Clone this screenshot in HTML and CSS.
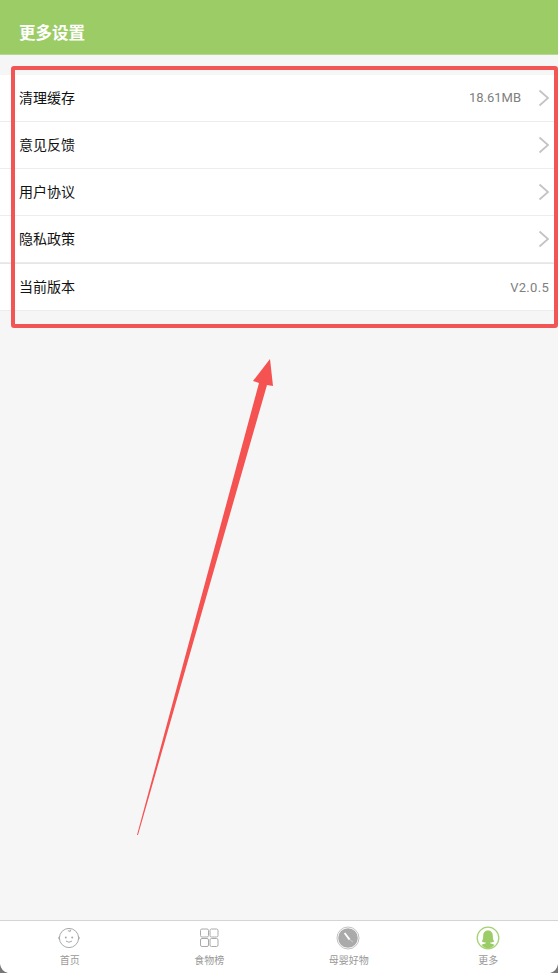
FILE: index.html
```html
<!DOCTYPE html>
<html lang="zh-CN">
<head>
    <meta charset="UTF-8">
    <meta name="viewport" content="width=device-width, initial-scale=1.0">
    <title>更多设置</title>
    <link rel="stylesheet" href="styles.css">
</head>
<body>
    <div class="app">
        <div class="header">更多设置</div>
        <div class="content">
            <div class="list">
                <div class="row">
                    <span class="row-title">清理缓存</span>
                    <span class="row-value">18.61MB</span>
                    <svg class="chevron" viewBox="0 0 12 18"><path d="M1.5 1.5 L10 9 L1.5 16.5"/></svg>
                </div>
                <div class="row">
                    <span class="row-title">意见反馈</span>
                    <svg class="chevron" viewBox="0 0 12 18"><path d="M1.5 1.5 L10 9 L1.5 16.5"/></svg>
                </div>
                <div class="row">
                    <span class="row-title">用户协议</span>
                    <svg class="chevron" viewBox="0 0 12 18"><path d="M1.5 1.5 L10 9 L1.5 16.5"/></svg>
                </div>
                <div class="row">
                    <span class="row-title">隐私政策</span>
                    <svg class="chevron" viewBox="0 0 12 18"><path d="M1.5 1.5 L10 9 L1.5 16.5"/></svg>
                </div>
                <div class="row row-version">
                    <span class="row-title">当前版本</span>
                    <span class="row-value">V2.0.5</span>
                </div>
            </div>
        </div>
        <div class="tabbar">
            <div class="tab">
                <svg class="tab-icon" viewBox="0 0 24 24">
                    <circle class="line" cx="12" cy="12" r="9.6"/>
                    <path class="line" d="M2.6 10.2 Q0.6 12 2.6 13.8 M21.4 10.2 Q23.4 12 21.4 13.8 M10.8 4.4 Q12.4 6.4 13.8 5 Q13.6 3.4 12.4 4.2"/>
                    <circle class="dot" cx="8.8" cy="11.6" r="1"/>
                    <circle class="dot" cx="15.2" cy="11.6" r="1"/>
                    <path class="line" d="M9 15 Q12 17.6 15 15"/>
                </svg>
                <span>首页</span>
            </div>
            <div class="tab">
                <svg class="tab-icon" viewBox="0 0 24 24">
                    <rect class="line" x="3.5" y="3" width="8" height="8" rx="1.5"/>
                    <rect class="line" x="13" y="3" width="8" height="8" rx="1.5"/>
                    <rect class="line" x="3.5" y="12.5" width="8" height="8" rx="1.5"/>
                    <rect class="line" x="13" y="12.5" width="8" height="8" rx="1.5"/>
                </svg>
                <span>食物榜</span>
            </div>
            <div class="tab">
                <svg class="tab-icon" viewBox="0 0 24 24">
                    <circle class="solid" cx="12" cy="12" r="9.8"/>
                    <circle class="ring" cx="12" cy="12" r="11"/>
                    <path class="hand" d="M8.6 7 L13.6 13.6"/>
                    <path class="hand-thin" d="M13.6 13.6 L17 16"/>
                </svg>
                <span>母婴好物</span>
            </div>
            <div class="tab tab-active">
                <svg class="tab-icon" viewBox="0 0 24 24">
                    <circle class="ring-green" cx="12" cy="12" r="10.8"/>
                    <path class="solid-green" d="M12 4.4 C8.4 4.4 7.2 7 7.2 9.8 C7.2 12.4 6.8 14.2 5.8 15.4 C7 16.2 8.4 16.4 9.8 16.4 L9.8 17.2 C8.2 17.8 6.4 18.2 5.4 18.8 C7.2 21 9.4 22.2 12 22.2 C14.6 22.2 16.8 21 18.6 18.8 C17.6 18.2 15.8 17.8 14.2 17.2 L14.2 16.4 C15.6 16.4 17 16.2 18.2 15.4 C17.2 14.2 16.8 12.4 16.8 9.8 C16.8 7 15.6 4.4 12 4.4 Z"/>
                </svg>
                <span>更多</span>
            </div>
        </div>

        <!-- red markup drawn over the screenshot -->
        <svg class="markup" viewBox="0 0 558 973">
            <rect class="markup-box" x="13" y="68" width="543" height="258" rx="1"/>
            <path class="markup-arrow" d="M137 835 L259 383 L253 381 L270 359 L273 386 L267 385 L138 835 Z"/>
            <path class="corner" d="M0 964 Q1 971 8 973 L0 973 Z"/>
            <path class="corner" d="M558 964 Q557 971 550 973 L558 973 Z"/>
        </svg>
    </div>
</body>
</html>
```

FILE: styles.css
```css
* {
    box-sizing: border-box;
}
html, body {
    margin: 0;
    height: 100%;
}
body {
    font-family: "Noto Sans CJK SC", "Liberation Sans", sans-serif;
    background-color: #f6f6f6;
}
.app {
    position: relative;
    display: flex;
    flex-direction: column;
    height: 973px;
    overflow: hidden;
}
.header {
    height: 55px;
    padding-left: 19px;
    font-size: 16.5px;
    font-weight: bold;
    line-height: 64px;
    color: #fff;
    background-color: #9ccc65;
    border-bottom: 1px solid #b5d98d;
}
.content {
    flex: 1;
    padding-top: 20px;
}
.list {
    background: #fff;
}
.row {
    display: flex;
    align-items: center;
    height: 47px;
    padding: 0 8px 2px 19px;
    border-bottom: 1px solid #ececec;
}
.row-version {
    height: 48px;
    padding: 0 9px 0 19px;
    border-top: 1px solid #e6e6e6;
}
.row-title {
    font-size: 14px;
    color: #111;
}
.row-version .row-title {
    margin-top: -2px;
}
.row-value {
    margin-left: auto;
    font-family: Roboto, "Liberation Sans", sans-serif;
    font-size: 13px;
    color: #808080;
}
.row-version .row-value {
    letter-spacing: 0.3px;
}
.chevron {
    width: 12px;
    height: 18px;
    margin-left: auto;
    margin-top: 2px;
    fill: none;
    stroke: #c4c4c4;
    stroke-width: 1.8;
}
.row-value + .chevron {
    margin-left: 17px;
}
.tabbar {
    display: flex;
    height: 53px;
    background: #fff;
    border-top: 1px solid #d4d4d4;
}
.tab {
    flex: 1;
    display: flex;
    flex-direction: column;
    align-items: center;
    padding-top: 5px;
    font-size: 10px;
    line-height: 14px;
    color: #999;
}
.tab-icon {
    width: 24px;
    height: 24px;
    margin-bottom: 3px;
    margin-left: -1px;
}
.line {
    fill: none;
    stroke: #aaa;
    stroke-width: 1;
}
.dot {
    fill: #aaa;
}
.solid {
    fill: #aaa;
}
.ring {
    fill: none;
    stroke: #c2c2c2;
    stroke-width: 1;
}
.hand {
    fill: none;
    stroke: #fff;
    stroke-width: 1.8;
}
.hand-thin {
    fill: none;
    stroke: #e0e0e0;
    stroke-width: 0.6;
}
.ring-green {
    fill: none;
    stroke: #a5d276;
    stroke-width: 1.3;
}
.solid-green {
    fill: #9ccc65;
}
.markup {
    position: absolute;
    left: 0;
    top: 0;
    width: 558px;
    height: 973px;
}
.markup-box {
    fill: none;
    stroke: #f25555;
    stroke-width: 4;
}
.markup-arrow {
    fill: #f55252;
}
.corner {
    fill: #777;
}
```
